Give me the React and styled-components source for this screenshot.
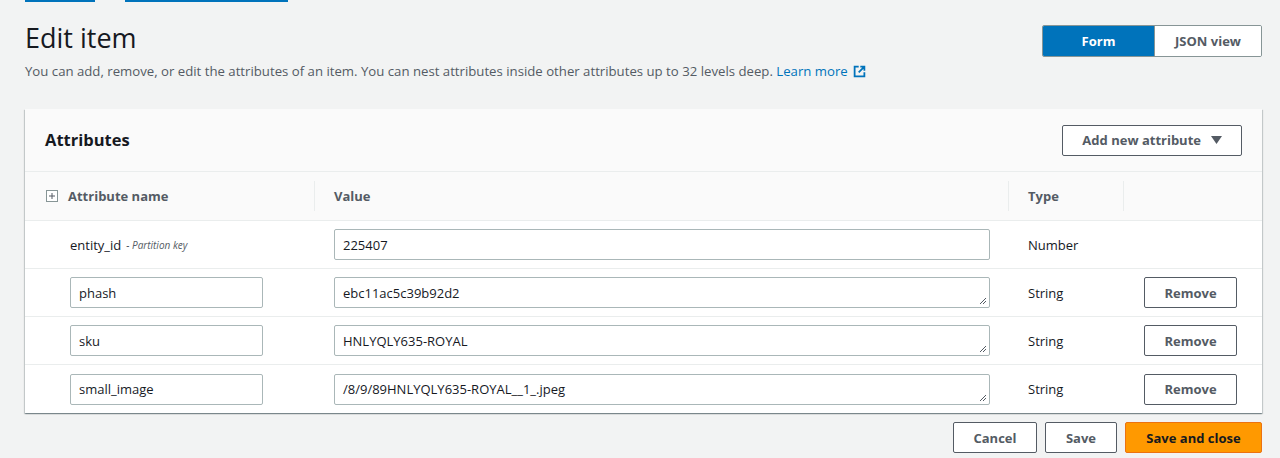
import React from "react";
import styled, { createGlobalStyle } from "styled-components";

const GlobalStyle = createGlobalStyle`
  body {
    margin: 0;
    background: #f2f3f3;
    font-family: "Open Sans", "Noto Sans", sans-serif;
    color: #16191f;
  }
`;

const Page = styled.div`
  width: 1280px;
  height: 458px;
  overflow: hidden;
  padding: 0 18px 0 25px;
  box-sizing: border-box;
`;

const Crumbs = styled.div`
  display: flex;
  gap: 30px;
  height: 2px;
  overflow: hidden;
`;

const Crumb = styled.span`
  display: block;
  width: ${p => p.w}px;
  border-bottom: 2px solid #0073bb;
`;

const HeaderRow = styled.div`
  display: flex;
  justify-content: space-between;
  align-items: flex-start;
`;

const Title = styled.h1`
  margin: 19px 0 0;
  font-size: 27px;
  font-weight: 400;
  line-height: 34px;
`;

const Description = styled.p`
  margin: 7px 0 0;
  font-size: 13.2px;
  color: #545b64;
  line-height: 18px;
`;

const LearnMore = styled.a`
  color: #0073bb;
  text-decoration: none;
  display: inline-flex;
  align-items: center;
  gap: 5px;
`;

const Segmented = styled.div`
  display: flex;
  margin-top: 23px;
  border: 1px solid #879596;
  border-radius: 2px;
  overflow: hidden;
`;

const Segment = styled.button`
  width: ${p => p.w}px;
  height: 30px;
  border: none;
  border-left: ${p => (p.first ? "none" : "1px solid #879596")};
  background: ${p => (p.active ? "#0073bb" : "#fff")};
  color: ${p => (p.active ? "#fff" : "#545b64")};
  font-family: inherit;
  font-size: 13px;
  font-weight: 700;
`;

const Panel = styled.div`
  margin-top: 29px;
  background: #fff;
  box-shadow: 0 1px 1px rgba(0, 28, 36, 0.3), 1px 1px 1px rgba(0, 28, 36, 0.15),
    -1px 1px 1px rgba(0, 28, 36, 0.15);
`;

const PanelHeader = styled.div`
  display: flex;
  justify-content: space-between;
  align-items: center;
  height: 62px;
  padding: 0 20px 0 20px;
  background: #fafafa;
  border-bottom: 1px solid #eaeded;
`;

const PanelTitle = styled.h2`
  margin: 0 0 2px;
  font-size: 16.5px;
  font-weight: 700;
`;

const Button = styled.button`
  height: 31px;
  padding: 0 ${p => p.px || 19}px;
  width: ${p => (p.w ? `${p.w}px` : "auto")};
  border: 1px solid ${p => (p.primary ? "#ec7211" : "#545b64")};
  border-radius: 2px;
  background: ${p => (p.primary ? "#ff9900" : "#fff")};
  color: ${p => (p.primary ? "#16191f" : "#545b64")};
  font-family: inherit;
  font-size: 13px;
  font-weight: 700;
  display: inline-flex;
  align-items: center;
  justify-content: center;
  gap: 10px;
  box-sizing: border-box;
`;

const Grid = styled.div`
  display: grid;
  grid-template-columns: 290px 694px 115px 1fr;
`;

const HeadCell = styled.div`
  height: 48px;
  display: flex;
  align-items: center;
  gap: 10px;
  padding-left: ${p => p.pl || 19}px;
  background: #fafafa;
  border-bottom: 1px solid #eaeded;
  font-size: 13px;
  font-weight: 700;
  color: #545b64;
  position: relative;
  &::after {
    content: "";
    display: ${p => (p.last ? "none" : "block")};
    position: absolute;
    right: 0;
    top: 9px;
    bottom: 9px;
    width: 1px;
    background: #eaeded;
  }
`;

const Cell = styled.div`
  height: 48px;
  display: flex;
  align-items: center;
  padding-left: ${p => p.pl || 19}px;
  border-bottom: ${p => (p.end ? "none" : "1px solid #eaeded")};
  font-size: 13px;
  color: #16191f;
  box-sizing: border-box;
`;

const KeyHint = styled.span`
  margin-left: 5px;
  font-size: 10px;
  font-style: italic;
  color: #545b64;
`;

const Field = styled.div`
  position: relative;
  width: ${p => p.w}px;
  height: 31px;
  border: 1px solid #aab7b8;
  border-radius: 2px;
  box-sizing: border-box;
  display: flex;
  align-items: center;
  padding-left: 8px;
  font-size: 13px;
  color: #16191f;
  background: #fff;
`;

const Grip = styled.svg`
  position: absolute;
  right: 2px;
  bottom: 2px;
`;

const Footer = styled.div`
  display: flex;
  justify-content: flex-end;
  gap: 8px;
  margin-top: 9px;
`;

const ExternalIcon = () => (
  <svg width="13" height="13" viewBox="0 0 16 16" fill="none" stroke="#0073bb" strokeWidth="2.2">
    <path d="M7 2H2v12h12V9" />
    <path d="M9 2h5v5M14 2L7 9" />
  </svg>
);

const PlusBox = () => (
  <svg width="12" height="12" viewBox="0 0 12 12">
    <rect x="0.5" y="0.5" width="11" height="11" fill="#fff" stroke="#879596" />
    <path d="M6 3v6M3 6h6" stroke="#545b64" strokeWidth="1" />
  </svg>
);

const Caret = () => (
  <svg width="11" height="8" viewBox="0 0 11 8">
    <path d="M0 0h11L5.5 8z" fill="#545b64" />
  </svg>
);

const ResizeGrip = () => (
  <Grip width="8" height="8" viewBox="0 0 8 8">
    <path d="M7 1L1 7M7 4L4 7" stroke="#545b64" strokeWidth="1" />
  </Grip>
);

const rows = [
  { name: "phash", value: "ebc11ac5c39b92d2" },
  { name: "sku", value: "HNLYQLY635-ROYAL" },
  { name: "small_image", value: "/8/9/89HNLYQLY635-ROYAL__1_.jpeg" },
];

export default function App() {
  return (
    <Page>
      <GlobalStyle />
      <Crumbs>
        <Crumb w={70} />
        <Crumb w={163} />
      </Crumbs>
      <HeaderRow>
        <div>
          <Title>Edit item</Title>
          <Description>
            You can add, remove, or edit the attributes of an item. You can nest attributes inside
            other attributes up to 32 levels deep.{" "}
            <LearnMore href="#">
              Learn more <ExternalIcon />
            </LearnMore>
          </Description>
        </div>
        <Segmented>
          <Segment first active w={111}>Form</Segment>
          <Segment w={107}>JSON view</Segment>
        </Segmented>
      </HeaderRow>

      <Panel>
        <PanelHeader>
          <PanelTitle>Attributes</PanelTitle>
          <Button>
            Add new attribute <Caret />
          </Button>
        </PanelHeader>
        <Grid>
          <HeadCell pl={21}>
            <PlusBox />
            Attribute name
          </HeadCell>
          <HeadCell>Value</HeadCell>
          <HeadCell>Type</HeadCell>
          <HeadCell last />

          <Cell pl={45}>
            entity_id<KeyHint>- Partition key</KeyHint>
          </Cell>
          <Cell>
            <Field w={656}>225407</Field>
          </Cell>
          <Cell>Number</Cell>
          <Cell />

          {rows.map((r, i) => {
            const end = i === rows.length - 1;
            return (
              <React.Fragment key={r.name}>
                <Cell pl={45} end={end}>
                  <Field w={193}>{r.name}</Field>
                </Cell>
                <Cell end={end}>
                  <Field w={656}>
                    {r.value}
                    <ResizeGrip />
                  </Field>
                </Cell>
                <Cell end={end}>String</Cell>
                <Cell end={end} pl={20}>
                  <Button w={93}>Remove</Button>
                </Cell>
              </React.Fragment>
            );
          })}
        </Grid>
      </Panel>

      <Footer>
        <Button w={84}>Cancel</Button>
        <Button w={72}>Save</Button>
        <Button primary w={137}>Save and close</Button>
      </Footer>
    </Page>
  );
}
